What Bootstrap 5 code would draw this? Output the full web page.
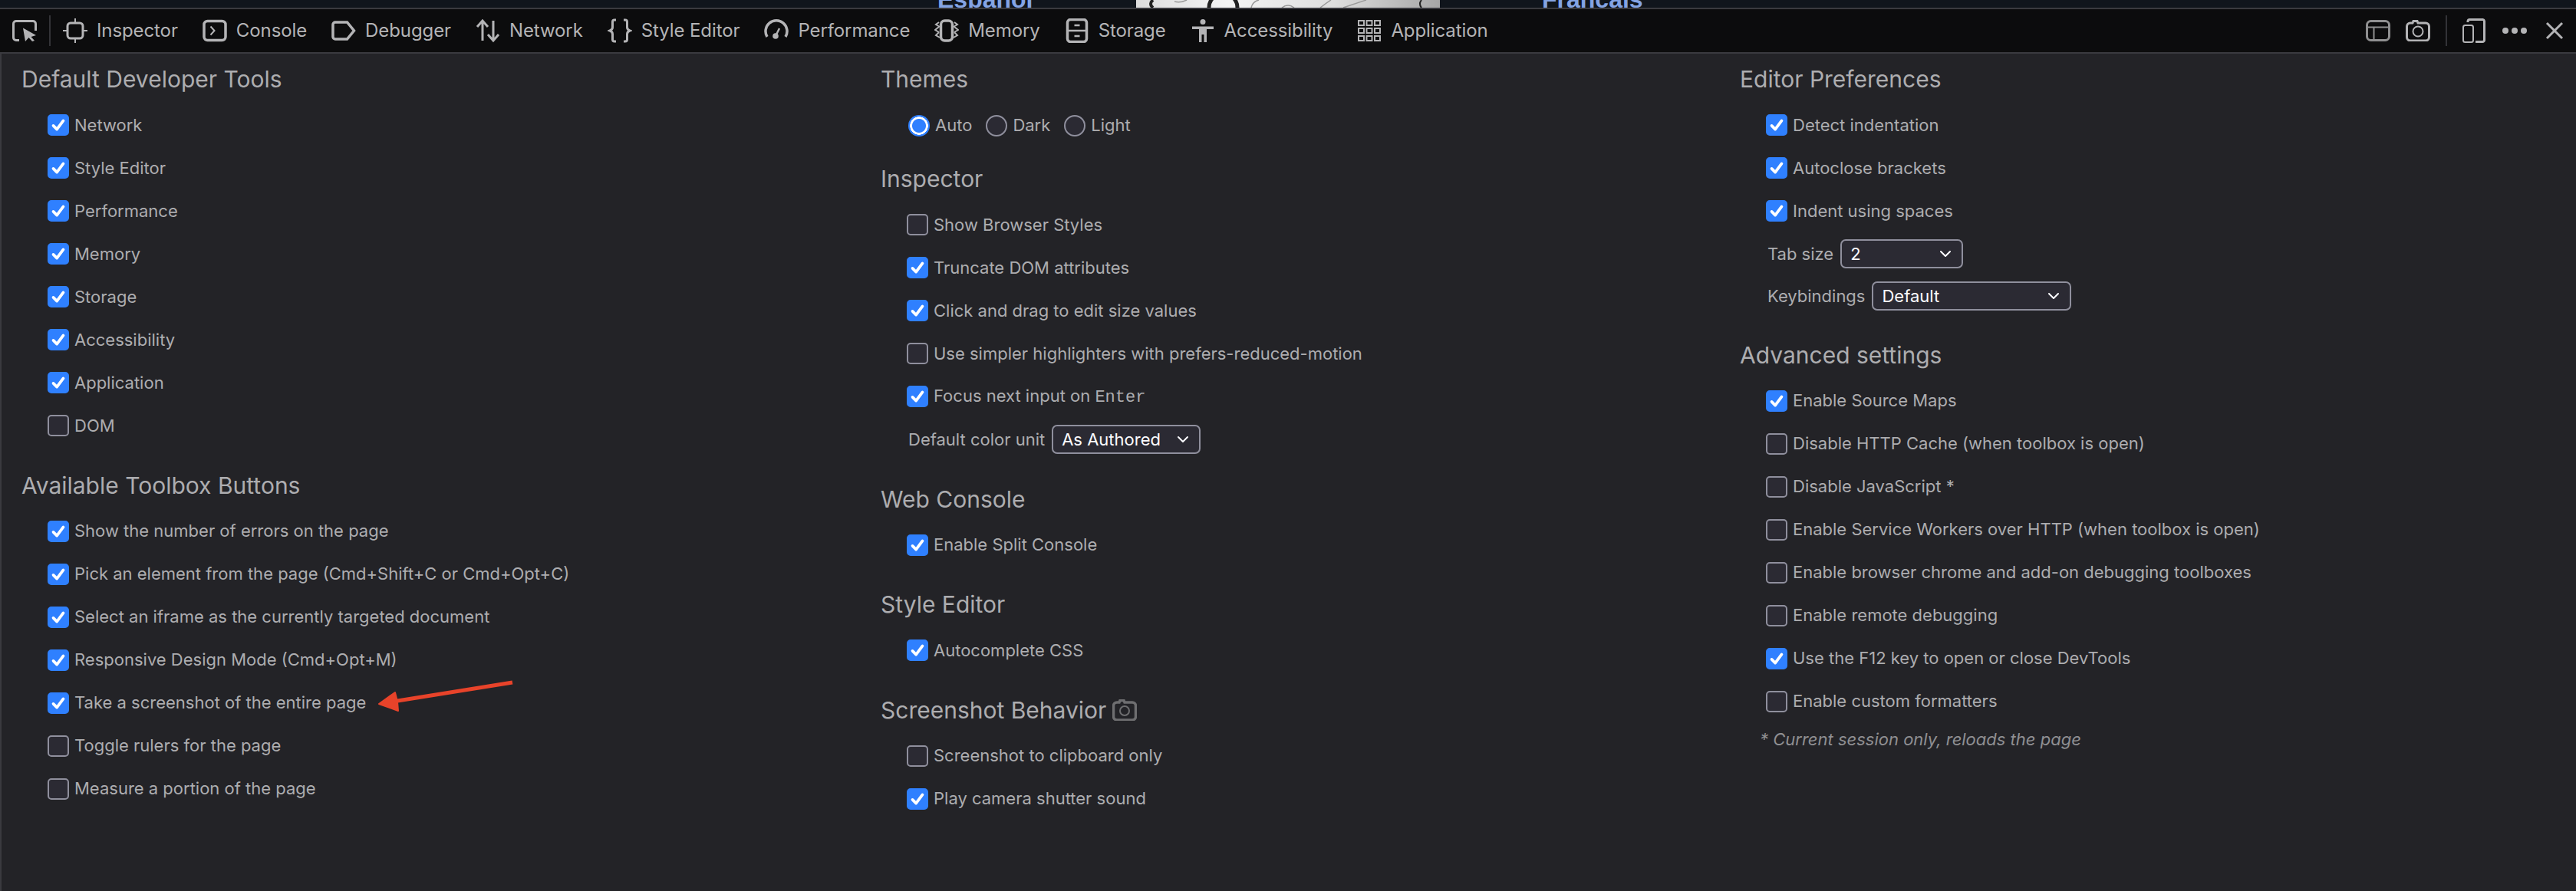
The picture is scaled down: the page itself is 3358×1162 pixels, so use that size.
<!doctype html>
<html lang="en">
<head>
<meta charset="utf-8">
<title>Toolbox Options</title>
<link href="https://cdn.jsdelivr.net/npm/bootstrap@5.3.0/dist/css/bootstrap.min.css" rel="stylesheet">
<style>
html,body{height:100%}
body{background:#232327;color:#adadb0;font-family:Inter,"Liberation Sans",sans-serif;font-size:22px;overflow:hidden;position:relative}
.top-strip{height:10px;background:#10151c;overflow:hidden;font-family:"Liberation Sans",sans-serif}
.top-strip span{font-size:32px;font-weight:700;color:#84a4e4;line-height:10px;display:block;margin-top:-6px}
.strip-es{margin-left:1222px;width:259px}
.strip-img{display:block;flex:none;width:396px;height:10px}
.strip-fr{margin-left:133px}
.dev-bar{height:60px;background:#0c0c0d;border-top:2px solid #3a3a3f;border-bottom:2px solid #3a3a3f;color:#b4b4b6;font-size:24px}
.dev-bar svg{display:block;flex:none;fill:none;stroke:currentColor;stroke-width:3}
.pick-btn{margin-left:16px}
.bar-sep{width:2px;height:40px;background:#333337}
.tab-list{gap:32px;margin-left:16px;letter-spacing:-.1px}
.dev-tab{gap:12px}
.tool-ico{gap:20px}
.dots-ico{margin-left:2px}
.close-x{margin-left:4px}
.option-wrap{margin-left:26px;display:grid;grid-template-columns:repeat(3,1120px);padding-top:13px}
.main-area{border-left:2px solid #3a3a3f;height:1092px}
.sect-title{font-size:30px;line-height:40px;font-weight:400;margin:0 0 12px;color:#adadb0}
.sect{margin-bottom:29.500px}
.opt-row{height:56px;margin:0 0 0 34px;gap:7px}
.box-in.form-check-input{width:28px;height:28px;margin:0;flex:none;background-color:#2b2a33;border:2px solid #8f8f9d;border-radius:5px;float:none}
.box-in.form-check-input:checked{background-color:#2f80ff;border-color:#2f80ff;background-size:26px;background-image:url("data:image/svg+xml,%3csvg xmlns='http://www.w3.org/2000/svg' viewBox='0 0 28 28'%3e%3cpath fill='none' stroke='%23fff' stroke-width='4' stroke-linecap='round' stroke-linejoin='round' d='M7 15l5 5 9-12'/%3e%3c/svg%3e")}
.radio-in.form-check-input{width:28px;height:28px;margin:0;flex:none;background-color:#2b2a33;border:2px solid #8f8f9d;float:none}
.radio-in.form-check-input:checked{background:radial-gradient(circle,#2f80ff 0 8.5px,#fff 9.5px 11.5px,#2f80ff 12px);border:0}
.radio-row{padding:12px 0 3.500px 36px;gap:18px}
.radio-item{gap:7px}
.sel-in.form-select{height:38px;padding:0 0 0 11px;background-color:#2b2a33;border:2px solid #8f8f9d;border-radius:7px;color:#fbfbfe;font-size:22px;background-position:right 10px center;background-size:22px;background-image:url("data:image/svg+xml,%3csvg xmlns='http://www.w3.org/2000/svg' viewBox='0 0 22 22'%3e%3cpath fill='none' stroke='%23fbfbfe' stroke-width='2' stroke-linecap='round' stroke-linejoin='round' d='M5 8l6 6 6-6'/%3e%3c/svg%3e")}
.sel-in.sel-unit{width:194px}
.sel-in.sel-tab{width:160px}
.sel-in.sel-key{width:260px}
.sel-row{gap:9px;height:56px;margin-left:36px}
.sel-row-b{height:54px}
.key-mono{font-family:"Liberation Mono",monospace}
.note-line{margin:6px 0 0 26px;font-style:italic;color:#8f8f92;line-height:30px}
.ann-arrow{position:absolute;left:480px;top:880px;pointer-events:none}
.mini-cam{margin-left:8px;fill:none;stroke:#6e6e70;stroke-width:3.5;vertical-align:-3px}
</style>
</head>
<body>
<div class="top-strip d-flex"><span class="strip-es">Español</span><svg class="strip-img" viewBox="0 0 396 10" preserveAspectRatio="none"><defs><linearGradient id="metal"><stop offset="0" stop-color="#dcdcdc"/><stop offset=".3" stop-color="#f4f4f4"/><stop offset=".65" stop-color="#dedede"/><stop offset="1" stop-color="#a6a6a6"/></linearGradient></defs><rect width="396" height="10" fill="url(#metal)"/><g fill="none" stroke="#9a9a9a" stroke-width="1.500"><path d="M50 2q8 2 16-2M150 10q2-8 10-10M240 10q8-6 14-10M190 10q8-6 16 0M270 10l30-10"/></g><g fill="none" stroke="#222"><path d="M95 10A18 18 0 0 1 132 10" stroke-width="5"/><path d="M22 0q-6 5 0 10" stroke-width="4"/><path d="M372 0q-4 5 0 10" stroke-width="2"/></g></svg><span class="strip-fr">Français</span></div>
<nav class="dev-bar d-flex align-items-center">
  <svg class="pick-btn" width="32" height="28" viewBox="0 0 32 28"><path d="M9 26.500H5A3.500 3.500 0 0 1 1.500 23V5A3.500 3.500 0 0 1 5 1.500h22A3.500 3.500 0 0 1 30.500 5v9"/><path d="M14 10.500L31 20l-6.500 2L29 27l-3 1-4.500-5L17 28z" fill="currentColor" stroke="none"/></svg>
  <div class="bar-sep ms-3"></div>
  <div class="tab-list d-flex align-items-center">
    <div class="dev-tab d-flex align-items-center"><svg width="32" height="32" viewBox="0 0 32 32"><rect x="6" y="6" width="20" height="20" rx="4"/><path d="M16 0v6M16 26v6M0 16h6M26 16h6" stroke-width="2"/></svg><span>Inspector</span></div>
    <div class="dev-tab d-flex align-items-center"><svg width="32" height="32" viewBox="0 0 32 32"><rect x="2" y="3.500" width="28" height="25" rx="4.500" stroke-width="3.500"/><path d="M10.500 10.500L15.500 16l-5 5.500" stroke-width="2"/></svg><span>Console</span></div>
    <div class="dev-tab d-flex align-items-center"><svg width="32" height="32" viewBox="0 0 32 32"><path d="M5 5h15.500L29.500 16l-9 11H5a3 3 0 0 1-3-3V8a3 3 0 0 1 3-3z" stroke-width="3.500"/></svg><span>Debugger</span></div>
    <div class="dev-tab d-flex align-items-center"><svg width="32" height="32" viewBox="0 0 32 32"><path d="M9 29V3M2 11l7-8 7 8M23 3v26M16 21l7 8 7-8"/></svg><span>Network</span></div>
    <div class="dev-tab d-flex align-items-center"><svg width="32" height="32" viewBox="0 0 32 32"><path d="M11 2H9a2.500 2.500 0 0 0-2.500 2.500v7c0 2-1 3.500-3.500 4.500 2.500 1 3.500 2.500 3.500 4.500v7A2.500 2.500 0 0 0 9 30h2M21 2h2a2.500 2.500 0 0 1 2.500 2.500v7c0 2 1 3.500 3.500 4.500-2.500 1-3.500 2.500-3.500 4.500v7A2.500 2.500 0 0 1 23 30h-2"/></svg><span>Style Editor</span></div>
    <div class="dev-tab d-flex align-items-center"><svg width="32" height="32" viewBox="0 0 32 32"><path d="M4 24A14 14 0 1 1 28 24" stroke-width="3.500"/><path d="M15 23l5-10" stroke-width="2.500"/><circle cx="15" cy="23" r="3.800" fill="currentColor" stroke="none"/></svg><span>Performance</span></div>
    <div class="dev-tab d-flex align-items-center"><svg width="32" height="32" viewBox="0 0 32 32"><rect x="8.500" y="3" width="15" height="26" rx="5" stroke-width="3.500"/><path d="M6 5L2 8l5 3M6 11l-5 4 5 3M6 18l-4 4 5 3M26 5l4 3-5 3M26 11l5 4-5 3M26 18l4 4-5 3" stroke-width="2"/></svg><span>Memory</span></div>
    <div class="dev-tab d-flex align-items-center"><svg width="32" height="32" viewBox="0 0 32 32"><rect x="3.500" y="1.500" width="25" height="29" rx="4" stroke-width="3.500"/><path d="M3 16h26M12.500 9h7M12.500 23h7" stroke-width="2.500"/></svg><span>Storage</span></div>
    <div class="dev-tab d-flex align-items-center"><svg width="32" height="32" viewBox="0 0 32 32"><circle cx="16" cy="4.500" r="3.500" fill="currentColor" stroke="none"/><path d="M2 10.500h28v3.500H21v17h-3.500V21h-3v10H11V14H2z" fill="currentColor" stroke="none"/></svg><span>Accessibility</span></div>
    <div class="dev-tab d-flex align-items-center"><svg width="32" height="32" viewBox="0 0 32 32"><g stroke-width="2"><rect x="2" y="3" width="7" height="6"/><rect x="12.500" y="3" width="7" height="6"/><rect x="23" y="3" width="7" height="6"/><rect x="2" y="13" width="7" height="6"/><rect x="12.500" y="13" width="7" height="6"/><rect x="23" y="13" width="7" height="6"/><rect x="2" y="23" width="7" height="6"/><rect x="12.500" y="23" width="7" height="6"/><rect x="23" y="23" width="7" height="6"/></g></svg><span>Application</span></div>
  </div>
  <div class="tool-ico d-flex align-items-center ms-auto">
    <svg width="32" height="28" viewBox="0 0 32 28"><rect x="1.500" y="1.500" width="29" height="25" rx="5" stroke="#8f8f90"/><path d="M2 9.500h28M10.500 9.500V26" stroke="#8f8f90" stroke-width="2"/></svg>
    <svg width="32" height="28" viewBox="0 0 32 28"><path d="M6 4h3l1-2.500h5L16 4h10a4.500 4.500 0 0 1 4.500 4.500v14A4.500 4.500 0 0 1 26 27H6a4.500 4.500 0 0 1-4.500-4.500v-14A4.500 4.500 0 0 1 6 4z"/><circle cx="16" cy="15" r="6.500" stroke-width="2"/></svg>
    <div class="bar-sep"></div>
    <svg width="30" height="32" viewBox="0 0 30 32"><rect x="1" y="9" width="13" height="22" rx="2.500" stroke-width="2"/><path d="M7 5V3.500A2.500 2.500 0 0 1 9.500 1.500h17A2.500 2.500 0 0 1 28.500 3.500v25a2.500 2.500 0 0 1-2.500 2H17"/></svg>
    <svg class="dots-ico" width="32" height="8" viewBox="0 0 32 8"><circle cx="4" cy="4" r="4" fill="currentColor" stroke="none"/><circle cx="16" cy="4" r="4" fill="currentColor" stroke="none"/><circle cx="28" cy="4" r="4" fill="currentColor" stroke="none"/></svg>
    <svg class="close-x me-3" width="24" height="24" viewBox="0 0 24 24"><path d="M2 2l20 20M22 2L2 22"/></svg>
  </div>
</nav>
<main class="main-area">
<div class="option-wrap">
  <div>
    <section class="sect">
      <h2 class="sect-title">Default Developer Tools</h2>
      <label class="opt-row d-flex align-items-center"><input class="box-in form-check-input" type="checkbox" checked>Network</label>
      <label class="opt-row d-flex align-items-center"><input class="box-in form-check-input" type="checkbox" checked>Style Editor</label>
      <label class="opt-row d-flex align-items-center"><input class="box-in form-check-input" type="checkbox" checked>Performance</label>
      <label class="opt-row d-flex align-items-center"><input class="box-in form-check-input" type="checkbox" checked>Memory</label>
      <label class="opt-row d-flex align-items-center"><input class="box-in form-check-input" type="checkbox" checked>Storage</label>
      <label class="opt-row d-flex align-items-center"><input class="box-in form-check-input" type="checkbox" checked>Accessibility</label>
      <label class="opt-row d-flex align-items-center"><input class="box-in form-check-input" type="checkbox" checked>Application</label>
      <label class="opt-row d-flex align-items-center"><input class="box-in form-check-input" type="checkbox">DOM</label>
    </section>
    <section class="sect">
      <h2 class="sect-title">Available Toolbox Buttons</h2>
      <label class="opt-row d-flex align-items-center"><input class="box-in form-check-input" type="checkbox" checked>Show the number of errors on the page</label>
      <label class="opt-row d-flex align-items-center"><input class="box-in form-check-input" type="checkbox" checked>Pick an element from the page (Cmd+Shift+C or Cmd+Opt+C)</label>
      <label class="opt-row d-flex align-items-center"><input class="box-in form-check-input" type="checkbox" checked>Select an iframe as the currently targeted document</label>
      <label class="opt-row d-flex align-items-center"><input class="box-in form-check-input" type="checkbox" checked>Responsive Design Mode (Cmd+Opt+M)</label>
      <label class="opt-row d-flex align-items-center"><input class="box-in form-check-input" type="checkbox" checked>Take a screenshot of the entire page</label>
      <label class="opt-row d-flex align-items-center"><input class="box-in form-check-input" type="checkbox">Toggle rulers for the page</label>
      <label class="opt-row d-flex align-items-center"><input class="box-in form-check-input" type="checkbox">Measure a portion of the page</label>
    </section>
  </div>
  <div>
    <section class="sect">
      <h2 class="sect-title">Themes</h2>
      <div class="radio-row d-flex align-items-center">
        <label class="radio-item d-flex align-items-center"><input class="radio-in form-check-input" type="radio" name="theme" checked>Auto</label>
        <label class="radio-item d-flex align-items-center"><input class="radio-in form-check-input" type="radio" name="theme">Dark</label>
        <label class="radio-item d-flex align-items-center"><input class="radio-in form-check-input" type="radio" name="theme">Light</label>
      </div>
    </section>
    <section class="sect">
      <h2 class="sect-title">Inspector</h2>
      <label class="opt-row d-flex align-items-center"><input class="box-in form-check-input" type="checkbox">Show Browser Styles</label>
      <label class="opt-row d-flex align-items-center"><input class="box-in form-check-input" type="checkbox" checked>Truncate DOM attributes</label>
      <label class="opt-row d-flex align-items-center"><input class="box-in form-check-input" type="checkbox" checked>Click and drag to edit size values</label>
      <label class="opt-row d-flex align-items-center"><input class="box-in form-check-input" type="checkbox">Use simpler highlighters with prefers-reduced-motion</label>
      <label class="opt-row d-flex align-items-center"><input class="box-in form-check-input" type="checkbox" checked><span>Focus next input on <span class="key-mono">Enter</span></span></label>
      <div class="sel-row d-flex align-items-center"><span>Default color unit</span><select class="sel-in sel-unit form-select"><option>As Authored</option></select></div>
    </section>
    <section class="sect">
      <h2 class="sect-title">Web Console</h2>
      <label class="opt-row d-flex align-items-center"><input class="box-in form-check-input" type="checkbox" checked>Enable Split Console</label>
    </section>
    <section class="sect">
      <h2 class="sect-title">Style Editor</h2>
      <label class="opt-row d-flex align-items-center"><input class="box-in form-check-input" type="checkbox" checked>Autocomplete CSS</label>
    </section>
    <section class="sect">
      <h2 class="sect-title">Screenshot Behavior<svg class="mini-cam" width="32" height="28" viewBox="0 0 32 28"><path d="M6 4h3l1-2.500h5L16 4h10a4.500 4.500 0 0 1 4.500 4.500v14A4.500 4.500 0 0 1 26 27H6a4.500 4.500 0 0 1-4.500-4.500v-14A4.500 4.500 0 0 1 6 4z"/><circle cx="16" cy="15" r="6" stroke-width="2"/></svg></h2>
      <label class="opt-row d-flex align-items-center"><input class="box-in form-check-input" type="checkbox">Screenshot to clipboard only</label>
      <label class="opt-row d-flex align-items-center"><input class="box-in form-check-input" type="checkbox" checked>Play camera shutter sound</label>
    </section>
  </div>
  <div>
    <section class="sect">
      <h2 class="sect-title">Editor Preferences</h2>
      <label class="opt-row d-flex align-items-center"><input class="box-in form-check-input" type="checkbox" checked>Detect indentation</label>
      <label class="opt-row d-flex align-items-center"><input class="box-in form-check-input" type="checkbox" checked>Autoclose brackets</label>
      <label class="opt-row d-flex align-items-center"><input class="box-in form-check-input" type="checkbox" checked>Indent using spaces</label>
      <div class="sel-row d-flex align-items-center"><span>Tab size</span><select class="sel-in sel-tab form-select"><option>2</option></select></div>
      <div class="sel-row sel-row-b d-flex align-items-center"><span>Keybindings</span><select class="sel-in sel-key form-select"><option>Default</option></select></div>
    </section>
    <section class="sect">
      <h2 class="sect-title">Advanced settings</h2>
      <label class="opt-row d-flex align-items-center"><input class="box-in form-check-input" type="checkbox" checked>Enable Source Maps</label>
      <label class="opt-row d-flex align-items-center"><input class="box-in form-check-input" type="checkbox">Disable HTTP Cache (when toolbox is open)</label>
      <label class="opt-row d-flex align-items-center"><input class="box-in form-check-input" type="checkbox">Disable JavaScript *</label>
      <label class="opt-row d-flex align-items-center"><input class="box-in form-check-input" type="checkbox">Enable Service Workers over HTTP (when toolbox is open)</label>
      <label class="opt-row d-flex align-items-center"><input class="box-in form-check-input" type="checkbox">Enable browser chrome and add-on debugging toolboxes</label>
      <label class="opt-row d-flex align-items-center"><input class="box-in form-check-input" type="checkbox">Enable remote debugging</label>
      <label class="opt-row d-flex align-items-center"><input class="box-in form-check-input" type="checkbox" checked>Use the F12 key to open or close DevTools</label>
      <label class="opt-row d-flex align-items-center"><input class="box-in form-check-input" type="checkbox">Enable custom formatters</label>
      <p class="note-line">* Current session only, reloads the page</p>
    </section>
  </div>
</div>
</main>
<svg class="ann-arrow" width="200" height="60" viewBox="480 880 200 60"><path d="M518 915l1 12-25-9 21-15z" fill="#e8432a" stroke="#e8432a" stroke-width="2" stroke-linejoin="round"/><path d="M668 890L512 915" stroke="#e8432a" stroke-width="5"/></svg>
<script src="https://cdn.jsdelivr.net/npm/bootstrap@5.3.0/dist/js/bootstrap.bundle.min.js"></script>
</body>
</html>
